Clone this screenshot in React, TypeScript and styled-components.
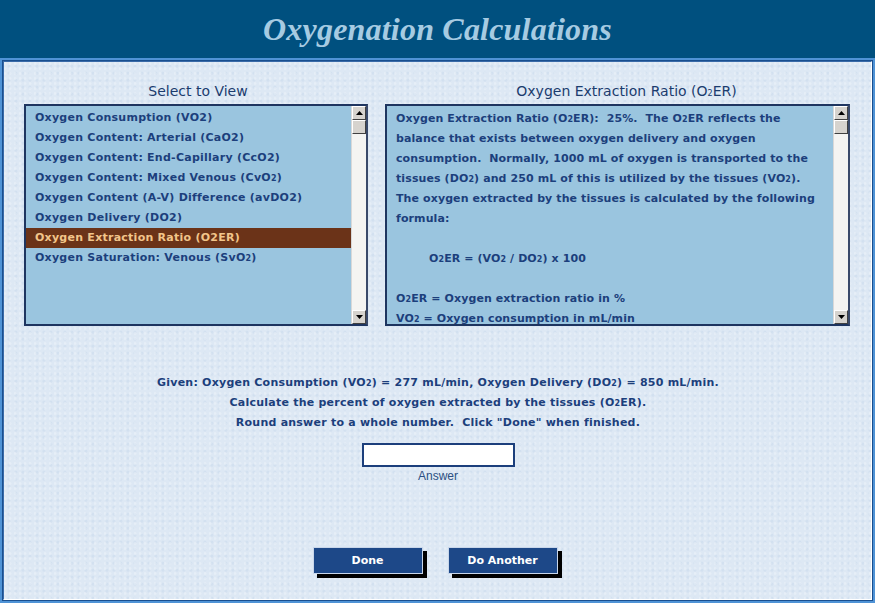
import React from "react";
import styled, { createGlobalStyle } from "styled-components";

const Global = createGlobalStyle`
  html, body { margin: 0; padding: 0; }
  body {
    width: 875px;
    height: 603px;
    overflow: hidden;
    background: #dde8f4;
    font-family: "DejaVu Sans", Verdana, sans-serif;
  }
`;

const Page = styled.div`
  width: 875px;
  height: 603px;
  display: flex;
  flex-direction: column;
`;

const Header = styled.header`
  height: 58px;
  background: #00507f;
  display: flex;
  align-items: center;
  justify-content: center;
`;

const Title = styled.h1`
  margin: 0;
  font-family: "Liberation Serif", "Times New Roman", serif;
  font-style: italic;
  font-weight: bold;
  font-size: 32px;
  color: #a6cbe2;
  letter-spacing: 0.2px;
`;

const Frame = styled.main`
  flex: 1;
  border: 2px solid #4f93d6;
  box-shadow: 0 0 0 1px #1a4f8f inset;
  background: #1f5a9a;
  display: flex;
`;

const Panel = styled.div`
  flex: 1;
  margin: 1px;
  border-top: 1px solid #3a6ba8;
  border-left: 1px solid #3a6ba8;
  border-right: 1px solid #ffffff;
  border-bottom: 1px solid #ffffff;
  background-color: #dde8f4;
  background-image:
    radial-gradient(circle at 20% 30%, rgba(255,255,255,0.25) 0 1px, transparent 2px),
    radial-gradient(circle at 70% 60%, rgba(175,198,226,0.22) 0 1px, transparent 2px);
  background-size: 5px 5px, 7px 7px;
  display: flex;
  flex-direction: column;
  align-items: center;
  padding: 20px 19px 0 20px;
`;

const Columns = styled.div`
  align-self: stretch;
  display: grid;
  grid-template-columns: 344px 465px;
  column-gap: 17px;
`;

const Column = styled.section`
  display: flex;
  flex-direction: column;
  gap: 4px;
`;

const ColumnTitle = styled.h2<{ $shift?: number }>`
  margin: 0;
  height: 18px;
  line-height: 18px;
  text-align: center;
  font-family: "DejaVu Sans", Tahoma, sans-serif;
  font-weight: normal;
  font-size: 14px;
  color: #1b3c6e;
  padding-left: ${(p) => p.$shift ?? 0}px;
`;

const Box = styled.div`
  height: 222px;
  box-sizing: border-box;
  border: 2px solid #1e3560;
  border-right-color: #3a4a6a;
  background: #9ac5df;
  display: flex;
  overflow: hidden;
`;

const ListArea = styled.ul`
  flex: 1;
  margin: 0;
  padding: 2px 0 0;
  list-style: none;
`;

const Item = styled.li<{ $selected?: boolean }>`
  height: 20px;
  line-height: 20px;
  padding-left: 9px;
  font-size: 11px;
  font-weight: bold;
  letter-spacing: 0.25px;
  color: ${(p) => (p.$selected ? "#f2c58a" : "#1c3f7c")};
  background: ${(p) => (p.$selected ? "#6b3318" : "transparent")};
  white-space: nowrap;
`;

const TextArea = styled.div`
  flex: 1;
  padding: 3px 8px 0 9px;
  font-size: 11px;
  font-weight: bold;
  letter-spacing: 0.1px;
  line-height: 20px;
  color: #1c3f7c;
  white-space: nowrap;
`;

const Indent = styled.span`
  display: inline-block;
  width: 33px;
  height: 1px;
  vertical-align: baseline;
`;

const Sub = styled.span`
  font-size: 8px;
  line-height: 1;
`;

const Scrollbar = styled.div`
  width: 14px;
  background: #f4f4f2;
  display: flex;
  flex-direction: column;
  border-left: 1px solid #d8d8d8;
`;

const ArrowBtn = styled.div`
  height: 14px;
  box-sizing: border-box;
  background: #d6d3ce;
  border-top: 1px solid #ffffff;
  border-left: 1px solid #ffffff;
  border-right: 1px solid #404040;
  border-bottom: 1px solid #404040;
  display: flex;
  align-items: center;
  justify-content: center;
`;

const Thumb = styled(ArrowBtn)`
  height: 14px;
`;

const Track = styled.div`
  flex: 1;
`;

const Arrow = ({ down }: { down?: boolean }) => (
  <svg width="7" height="4" viewBox="0 0 7 4">
    {down ? <polygon points="0,0 7,0 3.5,4" fill="#000" /> : <polygon points="3.5,0 7,4 0,4" fill="#000" />}
  </svg>
);

const ScrollBar = () => (
  <Scrollbar>
    <ArrowBtn>
      <Arrow />
    </ArrowBtn>
    <Thumb />
    <Track />
    <ArrowBtn>
      <Arrow down />
    </ArrowBtn>
  </Scrollbar>
);

const Question = styled.div`
  margin-top: 47px;
  text-align: center;
  font-size: 11px;
  font-weight: bold;
  letter-spacing: 0.23px;
  line-height: 20px;
  color: #1c3f7c;
`;

const AnswerInput = styled.input`
  margin-top: 10px;
  width: 153px;
  height: 24px;
  box-sizing: border-box;
  border: 2px solid #1c3f7c;
  background: #ffffff;
  outline: none;
  font-size: 12px;
`;

const AnswerLabel = styled.label`
  margin-top: 2px;
  line-height: 14px;
  font-family: "Liberation Sans", Arial, sans-serif;
  font-size: 12px;
  color: #2c4f82;
`;

const Buttons = styled.div`
  margin-top: 64px;
  margin-right: 6px;
  display: flex;
  gap: 25px;
`;

const Button = styled.button`
  width: 110px;
  height: 27px;
  box-sizing: border-box;
  border: 1px solid #c8d6ea;
  background: #1d4888;
  box-shadow: 4px 4px 0 #000;
  color: #ffffff;
  font-family: "DejaVu Sans", Verdana, sans-serif;
  font-weight: bold;
  font-size: 11px;
  padding: 0;
  cursor: pointer;
`;

const items = [
  <>Oxygen Consumption (VO2)</>,
  <>Oxygen Content: Arterial (CaO2)</>,
  <>Oxygen Content: End-Capillary (CcO2)</>,
  <>Oxygen Content: Mixed Venous (CvO<Sub>2</Sub>)</>,
  <>Oxygen Content (A-V) Difference (avDO2)</>,
  <>Oxygen Delivery (DO2)</>,
  <>Oxygen Extraction Ratio (O2ER)</>,
  <>Oxygen Saturation: Venous (SvO<Sub>2</Sub>)</>,
];

export default function App() {
  return (
    <Page>
      <Global />
      <Header>
        <Title>Oxygenation Calculations</Title>
      </Header>
      <Frame>
        <Panel>
          <Columns>
            <Column>
              <ColumnTitle $shift={4}>Select to View</ColumnTitle>
              <Box>
                <ListArea>
                  {items.map((it, i) => (
                    <Item key={i} $selected={i === 6}>
                      {it}
                    </Item>
                  ))}
                </ListArea>
                <ScrollBar />
              </Box>
            </Column>
            <Column>
              <ColumnTitle $shift={18}>
                Oxygen Extraction Ratio (O<Sub>2</Sub>ER)
              </ColumnTitle>
              <Box>
                <TextArea>
                  Oxygen Extraction Ratio (O<Sub>2</Sub>ER):&nbsp; 25%.&nbsp; The O<Sub>2</Sub>ER reflects the
                  <br />
                  balance that exists between oxygen delivery and oxygen
                  <br />
                  consumption.&nbsp; Normally, 1000 mL of oxygen is transported to the
                  <br />
                  tissues (DO<Sub>2</Sub>) and 250 mL of this is utilized by the tissues (VO<Sub>2</Sub>).
                  <br />
                  The oxygen extracted by the tissues is calculated by the following
                  <br />
                  formula:
                  <br />
                  <br />
                  <Indent />O<Sub>2</Sub>ER = (VO<Sub>2</Sub> / DO<Sub>2</Sub>) x 100
                  <br />
                  <br />
                  O<Sub>2</Sub>ER = Oxygen extraction ratio in %
                  <br />
                  VO<Sub>2</Sub> = Oxygen consumption in mL/min
                </TextArea>
                <ScrollBar />
              </Box>
            </Column>
          </Columns>
          <Question>
            Given: Oxygen Consumption (VO<Sub>2</Sub>) = 277 mL/min, Oxygen Delivery (DO<Sub>2</Sub>) = 850 mL/min.
            <br />
            Calculate the percent of oxygen extracted by the tissues (O<Sub>2</Sub>ER).
            <br />
            Round answer to a whole number.&nbsp; Click "Done" when finished.
          </Question>
          <AnswerInput id="answer" type="text" />
          <AnswerLabel htmlFor="answer">Answer</AnswerLabel>
          <Buttons>
            <Button>Done</Button>
            <Button>Do Another</Button>
          </Buttons>
        </Panel>
      </Frame>
    </Page>
  );
}
